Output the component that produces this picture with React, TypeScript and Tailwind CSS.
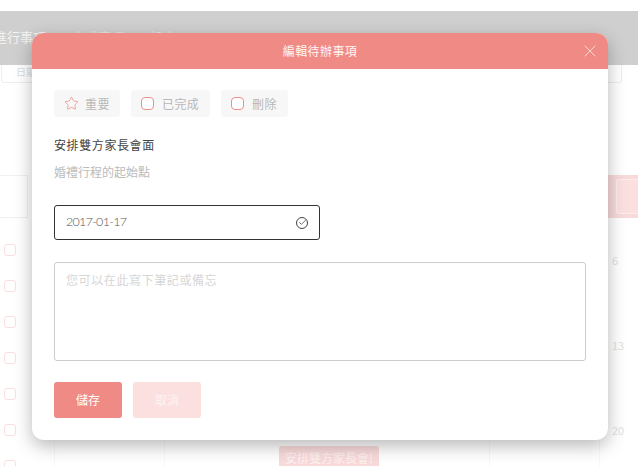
import { Star, X, Check } from "lucide-react";

const font = "font-['Noto_Sans_CJK_TC','Liberation_Sans',sans-serif]";

const Tag = ({ label, icon, width }: { label: string; icon: "star" | "box"; width: string }) => (
  <div className={`flex h-[27px] items-center gap-[6px] rounded-[3px] bg-[#f7f7f7] pl-[10px] text-[12px] tracking-[0.4px] text-[#b8b8b8] ${width}`}>
    {icon === "star" ? (
      <Star className="h-[15px] w-[15px] text-[#e58a86]" strokeWidth={1.2} />
    ) : (
      <span className="mr-[2px] h-[13px] w-[13px] rounded-[4px] border border-[#e8918c] bg-white" />
    )}
    {label}
  </div>
);

export default function App() {
  return (
    <div className={`relative h-[466px] w-[638px] overflow-hidden bg-white ${font}`}>
      {/* page behind the dialog */}
      <div className="pt-[11px]">
        <nav className="flex h-[54px] gap-[26px] bg-[#cfcfcf] pt-[16px] text-[13px] whitespace-nowrap text-[#f4f4f4]">
          <span className="-ml-[6px]">進行事項</span>
          <span className="opacity-60">完成事項</span>
          <span className="opacity-60">設定</span>
        </nav>
        <div className="mx-[1px] h-[18px] w-[621px] rounded-b-[3px] border border-t-0 border-[#eeeeee] pl-[14px] text-[10px] leading-[14px] text-[#dddddd]">
          日期
        </div>
        <div className="mt-[92px] flex h-[43px] justify-between">
          <div className="h-full w-[28px] border border-l-0 border-[#f0f0f0]" />
          <div className="flex h-full w-[44px] items-center bg-[#f9dada] pl-[22px]">
            <div className="h-[35px] w-full rounded-l-[3px] border border-r-0 border-[#fdeeee] bg-[#fce0e0]" />
          </div>
        </div>
        <div className="flex">
          <div className="flex w-[55px] flex-col gap-[24px] border-r border-[#f8f8f8] pt-[26px] pl-[4px]">
            {[0, 1, 2, 3, 4, 5, 6].map((i) => (
              <span key={i} className="h-[12px] w-[12px] shrink-0 rounded-[3px] border border-[#f9e0df]" />
            ))}
          </div>
          <div className="w-[110px] border-r border-[#f8f8f8]" />
          <div className="flex h-[248px] w-[325px] flex-col justify-end border-r border-[#f8f8f8] pl-[114px]">
            <div className="h-[20px] w-[100px] rounded-t-[3px] bg-[#f9dada] pt-[4px] text-center text-[12px] leading-[16px] whitespace-nowrap text-[#fdf1f1]">
              安排雙方家長會!
            </div>
          </div>
          <div className="w-[110px] border-r border-[#f8f8f8]" />
          <div className="flex flex-col gap-[68px] pt-[34px] pl-[12px] text-[11px] leading-[17px] text-[#e2e2e2]">
            <span>6</span>
            <span>13</span>
            <span>20</span>
          </div>
        </div>
      </div>

      {/* dialog */}
      <div className="absolute top-[33px] left-[32px] h-[407px] w-[576px] rounded-[12px] bg-white shadow-[0_6px_18px_rgba(0,0,0,0.28)]">
        <header className="relative flex h-[36px] items-center justify-center rounded-t-[12px] bg-[#ef8a85] text-[12px] tracking-[0.4px] text-[#fff6f5]">
          編輯待辦事項
          <X className="absolute top-[8px] right-[8px] h-[20px] w-[20px] text-[#fde8e7]" strokeWidth={1} />
        </header>
        <div className="px-[22px] pt-[21px]">
          <div className="flex gap-[11px]">
            <Tag label="重要" icon="star" width="w-[66px]" />
            <Tag label="已完成" icon="box" width="w-[79px]" />
            <Tag label="刪除" icon="box" width="w-[67px]" />
          </div>
          <p className="mt-[19px] text-[12px] leading-[18px] tracking-[0.6px] text-[#444444]">安排雙方家長會面</p>
          <p className="mt-[9px] text-[12px] leading-[18px] text-[#bbbbbb]">婚禮行程的起始點</p>
          <div className="mt-[24px] flex h-[35px] w-[266px] items-center justify-between rounded-[3px] border border-[#333333] px-[11px] font-['Lato',sans-serif] text-[12.5px] font-light tracking-[-0.7px] text-[#555555]">
            <span>2017-01-17</span>
            <span className="flex h-[12px] w-[12px] items-center justify-center rounded-full border border-[#444444]">
              <Check className="h-[9px] w-[9px] text-[#444444]" strokeWidth={2} />
            </span>
          </div>
          <div className="mt-[22px] h-[99px] w-[532px] rounded-[3px] border border-[#cccccc] pt-[8px] pl-[11px] text-[12px] leading-[18px] tracking-[0.6px] text-[#d6d6d6]">
            您可以在此寫下筆記或備忘
          </div>
          <div className="mt-[21px] flex gap-[11px] text-[12px]">
            <button className="h-[36px] w-[68px] rounded-[3px] bg-[#ef8a85] text-white">儲存</button>
            <button className="h-[36px] w-[68px] rounded-[3px] bg-[#fbe0df] text-[#fdf4f4]">取消</button>
          </div>
        </div>
      </div>
    </div>
  );
}
